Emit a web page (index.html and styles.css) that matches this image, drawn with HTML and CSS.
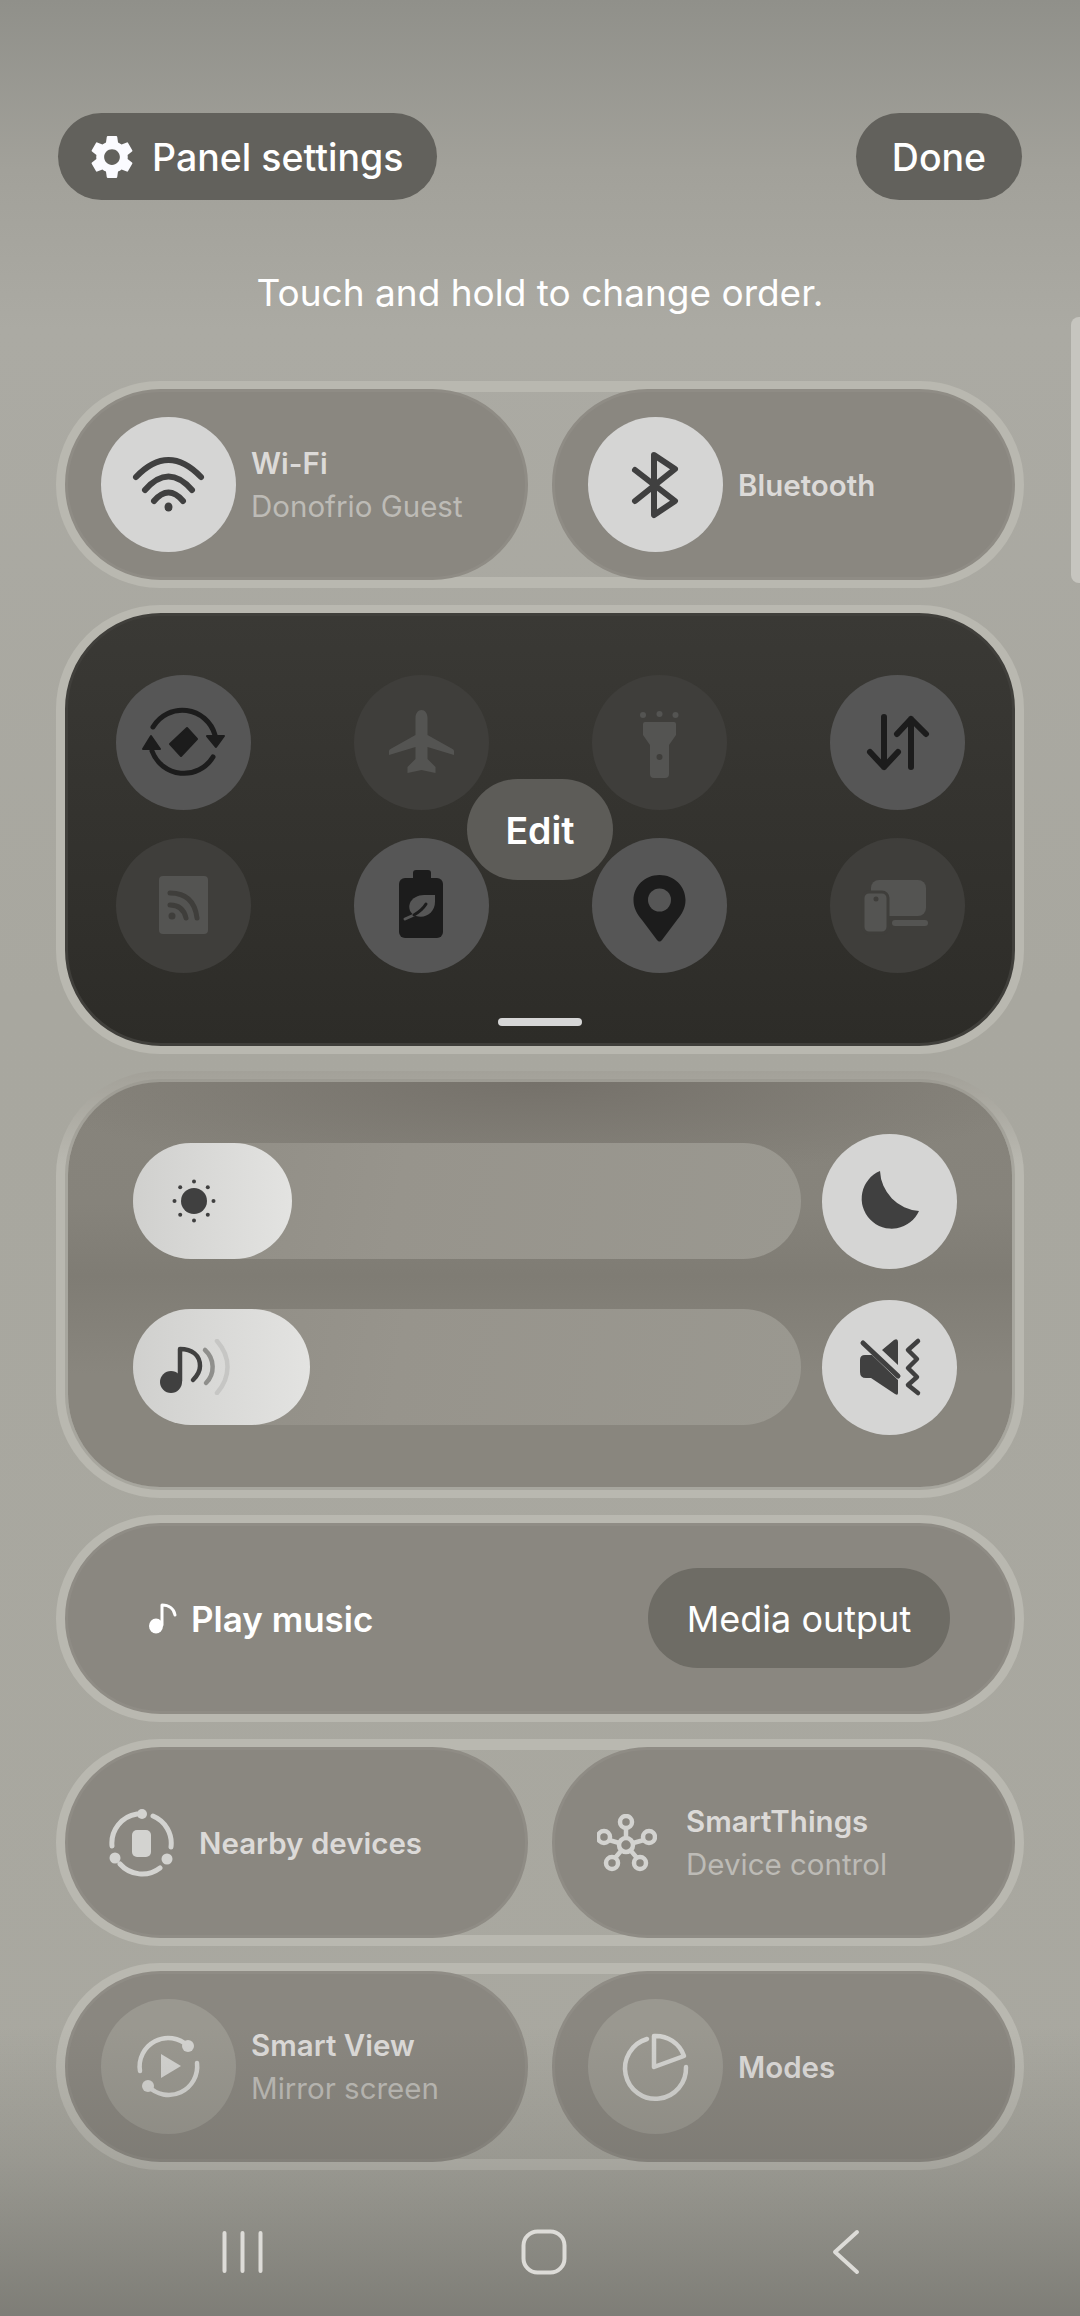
FILE: index.html
```html
<!DOCTYPE html>
<html lang="en">
<head>
<meta charset="utf-8">
<title>Panel settings</title>
<link rel="stylesheet" href="styles.css">
</head>
<body>
<div class="screen">
  <header class="top">
    <div class="chip chip-settings">
      <svg class="gear" viewBox="2.4 2 19.2 20"><path d="M19.14 12.94c.04-.3.06-.61.06-.94 0-.32-.02-.64-.07-.94l2.03-1.58a.49.49 0 0 0 .12-.61l-1.92-3.32a.488.488 0 0 0-.59-.22l-2.39.96c-.5-.38-1.03-.7-1.62-.94l-.36-2.54a.484.484 0 0 0-.48-.41h-3.84c-.24 0-.43.17-.47.41l-.36 2.54c-.59.24-1.13.57-1.62.94l-2.39-.96c-.22-.08-.47 0-.59.22L2.74 8.87c-.12.21-.08.47.12.61l2.03 1.58c-.05.3-.09.63-.09.94s.02.64.07.94l-2.03 1.58a.49.49 0 0 0-.12.61l1.92 3.32c.12.22.37.29.59.22l2.39-.96c.5.38 1.03.7 1.62.94l.36 2.54c.05.24.24.41.48.41h3.84c.24 0 .44-.17.47-.41l.36-2.54c.59-.24 1.13-.56 1.62-.94l2.39.96c.22.08.47 0 .59-.22l1.92-3.32c.12-.22.07-.47-.12-.61l-2.01-1.58zM12 15.6c-1.98 0-3.6-1.62-3.6-3.6s1.62-3.6 3.6-3.6 3.6 1.62 3.6 3.6-1.62 3.6-3.6 3.6z"/></svg>
      <span class="chip-text">Panel settings</span>
    </div>
    <div class="chip chip-done"><span class="chip-text">Done</span></div>
  </header>
  <p class="hint">Touch and hold to change order.</p>

  <main class="stack">
    <section class="group">
      <div class="pair">
        <div class="tile">
          <div class="disc disc-on">
            <svg class="ic" viewBox="0 0 135 135"><g class="s-dark"><path d="M35 60Q67.5 26 100 60"/><path d="M44 73Q67.5 46 91 73"/><path d="M53 84Q67.5 67 82 84"/></g><ellipse class="f-dark" cx="67.5" cy="90" rx="4" ry="4.5"/></svg>
          </div>
          <div class="label"><div class="name">Wi-Fi</div><div class="sub">Donofrio Guest</div></div>
        </div>
        <div class="tile">
          <div class="disc disc-on">
            <svg class="ic" viewBox="0 0 135 135"><path class="s-dark" d="M47 53L87 84L66 98V38L87 52L47 84"/></svg>
          </div>
          <div class="label"><div class="name">Bluetooth</div></div>
        </div>
      </div>
    </section>

    <section class="group group-dark">
      <div class="panel">
        <div class="qs-grid">
          <div class="qs qs-on">
            <svg class="ic" viewBox="0 0 135 135"><g class="s-black s-5"><path d="M37 52A34 34 0 0 1 99 60"/><path d="M36 76A34 34 0 0 0 97 82"/></g><path class="f-black s-round" d="M100 72L91 61H108ZM35 61L27 74H44Z"/><path class="f-black s-round" d="M71 53L81 64L65 81L54 69Z"/></svg>
          </div>
          <div class="qs">
            <svg class="ic" viewBox="0 0 135 135"><path class="f-faint" d="M67.5 35c3.500 0 6 3.500 6 8v17l25 14c1 .6 1.500 1.500 1.500 2.500V80l-26.500-8v12l8 8v6l-14-3-14 3v-6l8-8V72L35 80v-3.500c0-1 .5-1.900 1.500-2.500l25-14V43c0-4.500 2.500-8 6-8z"/></svg>
          </div>
          <div class="qs">
            <svg class="ic" viewBox="0 0 135 135"><g class="f-faint"><circle cx="51" cy="40" r="3"/><circle cx="67.500" cy="39" r="3"/><circle cx="83.500" cy="40" r="3"/><path d="M53 47H82Q84 47 84 49V60L77 70V99Q77 103 73 103H62Q58 103 58 99V70L51 60V49Q51 47 53 47Z"/></g><circle class="f-panel" cx="67.500" cy="82" r="3"/></svg>
          </div>
          <div class="qs qs-on">
            <svg class="ic" viewBox="0 0 135 135"><g class="s-black"><path d="M54 42V92M40 77L54 92L68 77"/><path d="M81 92V44M67 59L81 44L96 59"/></g></svg>
          </div>
          <div class="qs qs-low">
            <svg class="ic" viewBox="0 0 135 135"><rect class="f-faint" x="43" y="38" width="49" height="58" rx="4"/><circle class="f-panel" cx="56" cy="78" r="3.500"/><g class="s-panel s-5"><path d="M54 67Q67 67 70 80"/><path d="M54 55Q78 55 81 80"/></g></svg>
          </div>
          <div class="qs qs-on qs-low">
            <svg class="ic" viewBox="0 0 135 135"><rect class="f-black" x="59" y="32" width="18" height="12" rx="3"/><rect class="f-black" x="45" y="40" width="44" height="60" rx="6"/><path class="f-disc" d="M81 57V64C81 74 72 81 62 78C56 76 54 70 56 65C58 60 64 57 70 57Z"/><path class="s-disc s-3" d="M51 81L60 77"/><path class="s-black s-3" d="M60 77C65 74 69 71 72 66"/></svg>
          </div>
          <div class="qs qs-on qs-low">
            <svg class="ic" viewBox="0 0 135 135"><path class="f-black" d="M67.500 37C53 37 41.500 48 41.500 62C41.500 70 45 76 50 82L65 102Q67.500 105 70 102L85 82C90 76 93.500 70 93.500 62C93.500 48 82 37 67.500 37Z"/><circle class="f-disc" cx="67.500" cy="62" r="11.500"/></svg>
          </div>
          <div class="qs qs-low">
            <svg class="ic" viewBox="0 0 135 135"><rect class="f-faint" x="41" y="42" width="55" height="36" rx="8"/><rect class="f-faint" x="62" y="82" width="36" height="6" rx="3"/><rect class="f-faint phone" x="33" y="54" width="25" height="41" rx="6"/><circle class="f-panel" cx="46" cy="61" r="2.500"/></svg>
          </div>
        </div>
        <div class="edit"><span class="chip-text">Edit</span></div>
        <div class="handle"></div>
      </div>
    </section>

    <section class="group group-sliders">
      <div class="sliders">
        <div class="slider-row">
          <div class="track">
            <div class="thumb thumb-a">
              <svg class="sun" viewBox="0 0 44 44"><circle class="f-dark" cx="22" cy="22" r="13"/><g class="f-dark"><circle cx="22" cy="2.500" r="2"/><circle cx="22" cy="41.500" r="2"/><circle cx="2.500" cy="22" r="2"/><circle cx="41.500" cy="22" r="2"/><circle cx="8.200" cy="8.200" r="2"/><circle cx="35.800" cy="8.200" r="2"/><circle cx="8.200" cy="35.800" r="2"/><circle cx="35.800" cy="35.800" r="2"/></g></svg>
            </div>
          </div>
          <div class="disc disc-on">
            <svg class="ic" viewBox="0 0 135 135"><path class="f-dark" d="M58 37A30 30 0 1 0 97 77A42 42 0 0 1 58 37Z"/></svg>
          </div>
        </div>
        <div class="slider-row">
          <div class="track">
            <div class="thumb thumb-b">
              <svg class="music" viewBox="0 0 72 56"><circle class="f-dark" cx="13" cy="43" r="11"/><path class="s-dark s-4" d="M22 42V10C34 10 42 16 42 27C42 33 39 37 35 41"/><path class="s-mid s-4" d="M47 11C57 20 57 35 48 44"/><path class="s-pale s-4" d="M59 2C73 18 73 38 59 54"/></svg>
            </div>
          </div>
          <div class="disc disc-on">
            <svg class="ic" viewBox="0 0 135 135"><path class="f-dark" d="M60 50L72 40Q76 38 76 42V65ZM38 60Q38 55 43 55H50L76 80V93Q76 96 73 94L49 78H44Q38 78 38 72Z"/><path class="s-dark s-5" d="M41 43L76 76"/><path class="s-dark s-4" d="M96 41L86 50L95 59L86 68L95 77L86 85L96 93"/></svg>
          </div>
        </div>
      </div>
    </section>

    <section class="group">
      <div class="media">
        <div class="play">
          <svg class="note" viewBox="0 0 30 32"><ellipse class="f-white" cx="8" cy="24" rx="7" ry="7.500"/><path class="s-white s-3" d="M14 23V3C21 3 26 7 27 13"/></svg>
          <span class="chip-text">Play music</span>
        </div>
        <div class="output"><span class="chip-text">Media output</span></div>
      </div>
    </section>

    <section class="group">
      <div class="pair">
        <div class="tile tile-plain-a">
          <svg class="nearby" viewBox="0 0 65 68"><g class="s-soft s-5"><path d="M28 5A29.500 29.500 0 0 0 3 37"/><path d="M44 7A29.500 29.500 0 0 1 62 38"/><path d="M11 55A29.500 29.500 0 0 0 51 59"/></g><g class="f-soft"><circle cx="33" cy="5" r="5"/><circle cx="58" cy="50" r="5.500"/><circle cx="6" cy="49" r="5.500"/><rect x="23" y="21" width="19" height="27" rx="5"/></g></svg>
          <div class="label"><div class="name">Nearby devices</div></div>
        </div>
        <div class="tile tile-plain-b">
          <svg class="things" viewBox="0 0 60 58"><g class="s-soft s-4"><path d="M29 31L29 14M29 31L12 26M29 31L47 26M29 31L18 44M29 31L40 44"/></g><g class="s-soft s-4 f-tile"><circle cx="29" cy="31" r="7"/><circle cx="29" cy="8" r="6"/><circle cx="7" cy="23" r="6"/><circle cx="52" cy="23" r="6"/><circle cx="15" cy="49" r="6"/><circle cx="43" cy="49" r="6"/></g></svg>
          <div class="label"><div class="name">SmartThings</div><div class="sub">Device control</div></div>
        </div>
      </div>
    </section>

    <section class="group">
      <div class="pair">
        <div class="tile">
          <div class="disc disc-off">
            <svg class="ic" viewBox="0 0 135 135"><g class="s-soft s-4"><path d="M39 72A28.500 28.500 0 0 1 87 47"/><path d="M96 64A28.500 28.500 0 0 1 47 87"/></g><g class="f-soft"><circle cx="87" cy="47" r="6"/><circle cx="47" cy="87" r="6"/><path d="M60 55L80 67L60 79Z"/></g></svg>
          </div>
          <div class="label"><div class="name">Smart View</div><div class="sub">Mirror screen</div></div>
        </div>
        <div class="tile">
          <div class="disc disc-off">
            <svg class="ic" viewBox="0 0 135 135"><g class="s-soft s-4"><path d="M59 40A30.500 30.500 0 1 0 98 68"/><path d="M66 37A30 30 0 0 1 96 57L66 68Z"/></g></svg>
          </div>
          <div class="label"><div class="name">Modes</div></div>
        </div>
      </div>
    </section>
  </main>

  <nav class="nav">
    <svg class="nav-recents" viewBox="0 0 41 42"><path d="M2.500 2V40M20.500 2V40M38.500 2V40"/></svg>
    <svg class="nav-home" viewBox="0 0 46 46"><rect x="2.500" y="2.500" width="41" height="41" rx="14"/></svg>
    <svg class="nav-back" viewBox="0 0 28 46"><path d="M25 3L3 23L25 43" class="back-line"/></svg>
  </nav>

  <div class="shade-bottom"></div>
  <div class="scroll-tab"></div>
</div>
</body>
</html>
```
FILE: styles.css
```css
* { box-sizing: border-box; }
html, body { margin: 0; padding: 0; }
body { font-family: Inter, "Noto Sans", sans-serif; }

.screen {
  position: relative;
  width: 1080px;
  height: 2316px;
  overflow: hidden;
  background:
    linear-gradient(180deg, #90908a 0, #a2a19a 170px, #abaaa3 330px, #a8a79f 1000px, #a9a8a0 2316px);
}

/* header */
.top {
  display: flex;
  justify-content: space-between;
  padding: 113px 58px 0;
}
.chip {
  height: 87px;
  border-radius: 44px;
  background: #62615c;
  color: #fff;
  font-size: 37.500px;
  font-weight: 500;
  display: flex;
  align-items: center;
}
.chip-text { display: block; padding-top: 2px; }
.chip-settings { width: 379px; padding-left: 33px; gap: 19px; }
.chip-done { width: 166px; justify-content: center; }
.gear { width: 42px; height: 44px; fill: #fbfbff; }
.hint {
  margin: 0;
  height: 181px;
  padding-top: 71px;
  text-align: center;
  color: #fff;
  font-size: 37px;
  line-height: 44px;
}

/* groups */
.stack {
  display: flex;
  flex-direction: column;
  gap: 17px;
  padding: 0 56px;
}
.group {
  height: 207px;
  border: 11px solid #b9b8b0;
  border-left-width: 12px;
  border-right-width: 12px;
  border-radius: 104px;
}
.group-dark { height: 449px; }
.group-sliders {
  height: 427px;
  border-color: transparent;
  background:
    radial-gradient(ellipse 55% 24% at 50% 0, #75716a, rgba(117, 113, 106, 0)) padding-box,
    linear-gradient(180deg, #87847c, #86837b 30%, #7f7c74 48%, #89867e 72%) padding-box,
    linear-gradient(180deg, #a3a199 0, #b9b8b0 22%) border-box;
}
.pair {
  margin: -3px;
  height: 191px;
  display: grid;
  grid-template-columns: 463px 463px;
  gap: 24px;
}
.tile {
  display: flex;
  align-items: center;
  gap: 15px;
  padding-left: 33px;
  border-radius: 96px;
  border: 3px solid #8f8c85;
  background: #8a8780;
}
.tile-plain-a { padding-left: 41px; gap: 25px; }
.tile-plain-b { padding-left: 42px; gap: 29px; }
.disc {
  flex: none;
  width: 135px;
  height: 135px;
  border-radius: 50%;
}
.disc-on { background: #d5d5d4; }
.disc-off { background: #9a9890; }
.ic { display: block; width: 135px; height: 135px; }
.label { display: flex; flex-direction: column; gap: 7px; }
.name {
  font-size: 29.500px;
  line-height: 36px;
  font-weight: 600;
  color: #dcdad8;
}
.sub {
  font-size: 29.500px;
  line-height: 36px;
  color: #bdbbb6;
}

/* dark panel */
.panel {
  position: relative;
  margin: -3px;
  height: 433px;
  border-radius: 96px;
  padding: 59px 48px 0;
  background: linear-gradient(180deg, #3a3935, #2d2c28);
  border: 3px solid #403f3b;
}
.qs-grid {
  display: grid;
  grid-template-columns: repeat(4, 135px);
  grid-template-rows: 135px 135px;
  column-gap: 103px;
  row-gap: 28px;
}
.qs { border-radius: 50%; background: #3f3e3b; }
.qs-on { background: #565656; }
.qs-low { position: relative; z-index: 2; }
.edit {
  position: absolute;
  z-index: 1;
  left: 399px;
  top: 163px;
  width: 146px;
  height: 101px;
  border-radius: 51px;
  background: #5d5c58;
  color: #fff;
  font-size: 37.500px;
  font-weight: 600;
  display: flex;
  align-items: center;
  justify-content: center;
}
.handle {
  width: 84px;
  height: 8px;
  border-radius: 4px;
  background: #d6d6d6;
  margin: 45px auto 0;
}

/* sliders */
.sliders {
  margin: -3px;
  height: 411px;
  border-radius: 96px;
  border: 3px solid rgba(150, 148, 140, 0.5);
  padding: 52px 55px 0 65px;
  display: flex;
  flex-direction: column;
  gap: 31px;
}
.slider-row {
  display: flex;
  align-items: center;
  justify-content: space-between;
  height: 135px;
}
.track {
  width: 668px;
  height: 116px;
  margin-bottom: 1px;
  border-radius: 58px;
  background: linear-gradient(100deg, #8f8c84, #97948c 40%, #9a9890);
}
.thumb {
  height: 116px;
  border-radius: 58px;
  background: linear-gradient(90deg, #d0d0ce, #e3e3e1);
  display: flex;
  align-items: center;
}
.thumb-a { width: 159px; padding-left: 39px; }
.thumb-b { width: 177px; padding-left: 25px; }
.sun { width: 44px; height: 44px; }
.music { width: 72px; height: 56px; }

/* media */
.media {
  margin: -3px;
  height: 191px;
  border-radius: 96px;
  border: 3px solid #8f8c85;
  background: #8a8780;
  display: flex;
  align-items: center;
  justify-content: space-between;
  padding: 0 62px 1px 80px;
}
.play {
  display: flex;
  align-items: center;
  gap: 13px;
  color: #fff;
  font-size: 35px;
  font-weight: 600;
}
.note { width: 30px; height: 32px; }
.output {
  width: 302px;
  height: 100px;
  border-radius: 50px;
  background: #6e6c65;
  color: #fff;
  font-size: 36px;
  display: flex;
  align-items: center;
  justify-content: center;
}
.nearby { flex: none; width: 65px; height: 68px; }
.things { flex: none; width: 60px; height: 58px; }

/* svg paint */
svg path, svg circle, svg ellipse, svg rect { stroke-linecap: round; stroke-linejoin: round; }
.s-dark, .s-dark path { fill: none; stroke: #404040; stroke-width: 6; }
.f-dark, .f-dark circle { fill: #404040; }
.s-black, .s-black path { fill: none; stroke: #1c1c1c; stroke-width: 6; }
.f-black { fill: #1c1c1c; }
.f-faint, .f-faint circle, .f-faint path { fill: #545452; }
.f-panel { fill: #3f3e3b; }
.f-disc { fill: #565656; }
.s-panel path { fill: none; stroke: #3f3e3b; }
.s-disc { fill: none; stroke: #565656; }
.s-round { stroke: #1c1c1c; stroke-width: 2; }
.s-5, .s-5 path { stroke-width: 5; }
.s-3 { stroke-width: 3; }
.s-4, .s-4 path, .s-4 circle { stroke-width: 4.5; }
.s-mid { fill: none; stroke: #8f8f8c; }
.s-pale { fill: none; stroke: #c6c6c4; }
.s-soft, .s-soft path { fill: none; stroke: #d3d3d0; }
.s-soft circle { stroke: #d3d3d0; fill: #8a8780; }
.f-soft, .f-soft circle, .f-soft path, .f-soft rect { fill: #d3d3d0; }
.f-white { fill: #fff; }
.s-white { fill: none; stroke: #fff; }
.phone { stroke: #3f3e3b; stroke-width: 3; }

/* nav */
.nav {
  position: relative;
  z-index: 3;
  margin-top: 59px;
  display: grid;
  grid-template-columns: repeat(3, 302px);
  padding-left: 91px;
  justify-items: center;
  align-items: center;
  height: 46px;
}
.nav svg { display: block; fill: none; stroke: #dddcd8; stroke-width: 4; stroke-linecap: round; stroke-linejoin: round; }
.nav svg path, .nav svg rect { fill: none; }
.nav-recents { width: 41px; height: 42px; }
.nav-home { width: 46px; height: 46px; }
.nav-back { width: 28px; height: 46px; }

/* overlays */
.shade-bottom {
  position: absolute;
  z-index: 2;
  left: 0;
  right: 0;
  bottom: 0;
  height: 290px;
  pointer-events: none;
  background: linear-gradient(180deg, rgba(50, 50, 46, 0), rgba(50, 50, 46, 0.13) 45%, rgba(50, 50, 46, 0.36));
}
.scroll-tab {
  position: absolute;
  right: 0;
  top: 317px;
  width: 9px;
  height: 266px;
  border-radius: 8px 0 0 8px;
  background: #c6c5bf;
}
```
